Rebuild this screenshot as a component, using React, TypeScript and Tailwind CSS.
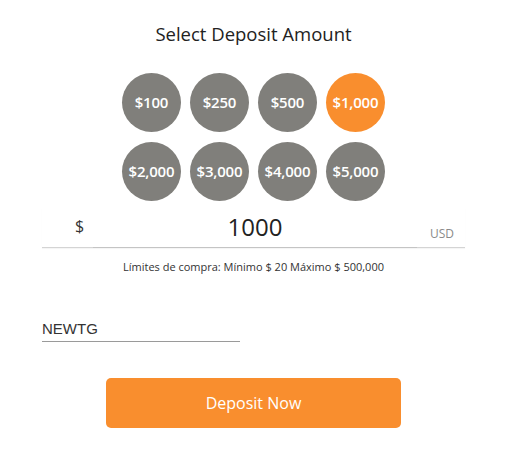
const amounts = ['$100', '$250', '$500', '$1,000', '$2,000', '$3,000', '$4,000', '$5,000']

function App() {
  const selected = '$1,000'

  return (
    <div className="w-[521px] h-[450px] bg-white font-['Open_Sans',sans-serif] text-[#333]">
      <div className="w-[423px] ml-[42px] pt-[21px] flex flex-col">
        <h2 className="text-center text-[18.5px] leading-[25px] text-[#222]">Select Deposit Amount</h2>

        <div className="mt-[27px] mx-auto grid grid-cols-4 gap-x-[9px] gap-y-[10px]">
          {amounts.map((a) => (
            <button
              key={a}
              className={
                'w-[59px] h-[59px] rounded-full flex items-center justify-center text-white text-[15px] font-semibold tracking-[-0.2px] ' +
                (a === selected ? 'bg-[#f98e2e]' : 'bg-[#807f7b]')
              }
            >
              {a}
            </button>
          ))}
        </div>

        <div className="mt-[7px] h-[40px] flex items-end border-b border-[#d4d4d4] shadow-[0_1px_1px_rgba(0,0,0,0.04)]">
          <span className="w-[51px] pl-[33px] pb-[10px] text-[16px] leading-[22px] text-[#333]">$</span>
          <div className="flex-1 h-full flex items-end justify-center border-b border-[#c4c4c4] -mb-px pb-[4px]">
            <span className="text-[24px] leading-[33px] text-[#222]">1000</span>
          </div>
          <span className="w-[48px] pl-[13px] pb-[4px] text-[12px] leading-[18px] text-[#8a8a8a]">USD</span>
        </div>

        <p className="mt-[11px] text-center text-[11px] leading-[16px] text-[#333]">
          Límites de compra: Mínimo $ 20 Máximo $ 500,000
        </p>

        <div className="mt-[41px] w-[198px] border-b border-[#9a9a9a] pb-px">
          <span className="font-['Liberation_Sans',Arial,sans-serif] text-[15px] leading-[19px] text-[#333]">NEWTG</span>
        </div>

        <button className="mt-[36px] mx-auto w-[295px] h-[50px] rounded-[5px] bg-[#f98e2e] text-white text-[16px]">
          Deposit Now
        </button>
      </div>
    </div>
  )
}

export default App
